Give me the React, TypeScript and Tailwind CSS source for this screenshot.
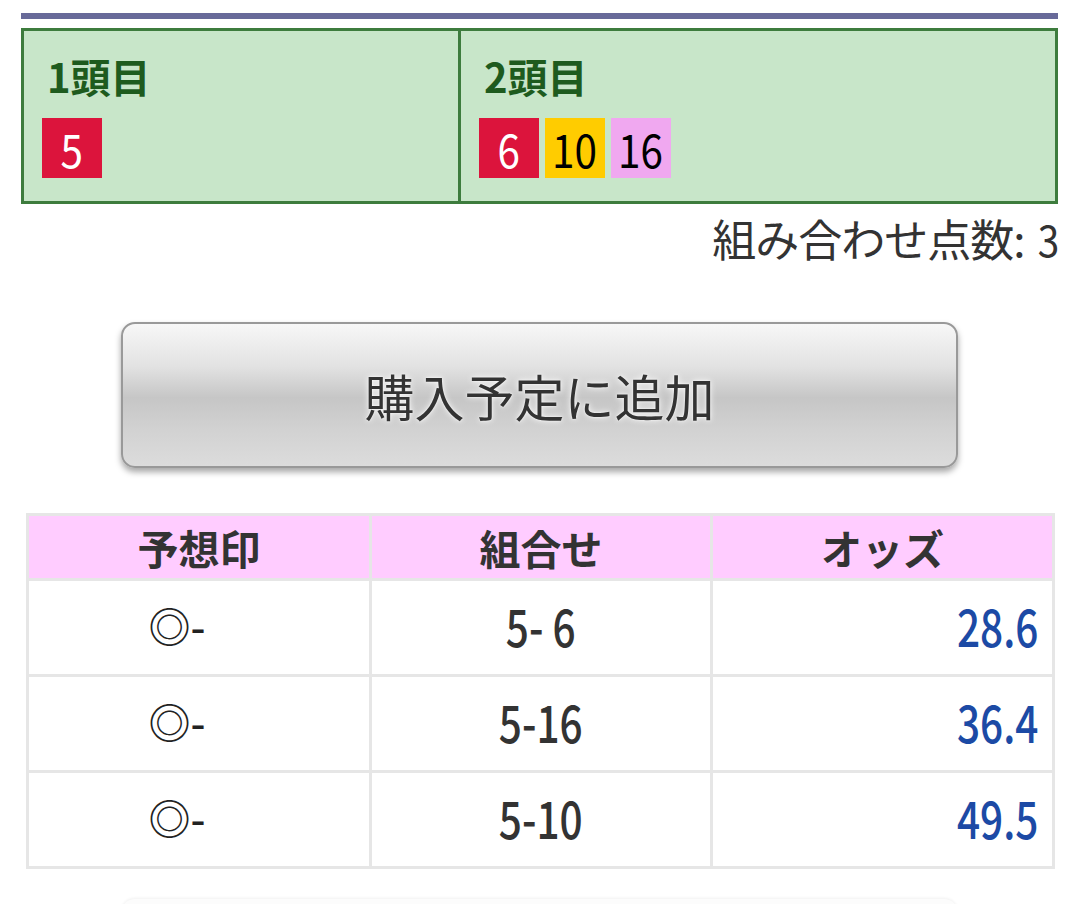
import React from "react";

const cjk = { fontFamily: '"Noto Sans CJK JP", "Noto Sans", sans-serif' };

function Badge({ n, cls }: { n: string; cls: string }) {
  return (
    <div className={`w-[60px] h-[60px] flex items-center justify-center text-[46px] leading-none ${cls}`}>
      <span className="inline-block scale-x-[0.88]">{n}</span>
    </div>
  );
}

const rows = [
  { mark: "◎-", combo: "5- 6", odds: "28.6" },
  { mark: "◎-", combo: "5-16", odds: "36.4" },
  { mark: "◎-", combo: "5-10", odds: "49.5" },
];

export default function App() {
  return (
    <div className="w-[1080px] h-[904px] bg-white overflow-hidden" style={cjk}>
      <div className="pl-[21px] w-[1058px]">
        <div className="mt-[13px] h-[6px] bg-[#686a99]" />
        <div className="mt-[9px] h-[176px] border-[3px] border-[#3d7c3d] bg-[#c8e6c9] flex">
          <div className="w-[434px] pl-[18px] pt-[21px]">
            <div className="pl-[5px] text-[40px] leading-[48px] font-bold text-[#1e5b1e]">1頭目</div>
            <div className="mt-[18px] flex gap-[6px]">
              <Badge n="5" cls="bg-[#dc143c] text-white" />
            </div>
          </div>
          <div className="flex-1 border-l-[3px] border-[#3d7c3d] pl-[18px] pt-[21px]">
            <div className="pl-[5px] text-[40px] leading-[48px] font-bold text-[#1e5b1e]">2頭目</div>
            <div className="mt-[18px] flex gap-[6px]">
              <Badge n="6" cls="bg-[#dc143c] text-white" />
              <Badge n="10" cls="bg-[#ffcc00] text-black" />
              <Badge n="16" cls="bg-[#f0a8f0] text-black" />
            </div>
          </div>
        </div>
        <div className="mt-[8px] flex justify-end items-baseline text-[44px] leading-[52px] text-[#333] tracking-[-1px]">
          <span>組み合わせ点数:</span>
          <span className="ml-[10px] inline-block scale-x-[0.88] origin-right">3</span>
        </div>
      </div>

      <div className="mt-[58px] ml-[121px] w-[837px] h-[146px] rounded-[14px] border-2 border-[#999] bg-[linear-gradient(to_bottom,#f7f7f7_0%,#e2e2e2_30%,#c6c6c6_52%,#d2d2d2_75%,#dcdcdc_100%)] shadow-[0_4px_6px_rgba(0,0,0,0.35)] flex items-center justify-center">
        <span className="text-[50px] leading-none text-[#333] [text-shadow:0_0_6px_#ffffff,0_0_2px_#ffffff]">購入予定に追加</span>
      </div>

      <table className="mt-[45px] ml-[26px] w-[1026px] table-fixed border-collapse">
        <colgroup>
          <col className="w-[343px]" />
          <col className="w-[341px]" />
          <col className="w-[342px]" />
        </colgroup>
        <thead>
          <tr>
            {["予想印", "組合せ", "オッズ"].map((h) => (
              <th
                key={h}
                className="h-[65px] p-0 border-[3px] border-[#e6e6e6] bg-[#ffccff] text-[41px] leading-none font-semibold text-[#333] text-center"
              >
                {h}
              </th>
            ))}
          </tr>
        </thead>
        <tbody>
          {rows.map((r, i) => (
            <tr key={i}>
              <td className="h-[96px] p-0 pr-[44px] pb-[6px] border-[3px] border-[#e6e6e6] text-center text-[42px] leading-none font-medium text-[#222]">
                {r.mark}
              </td>
              <td className="h-[96px] p-0 pb-[6px] border-[3px] border-[#e6e6e6] text-center text-[52px] leading-none font-medium text-[#333]">
                <span className="inline-block scale-x-[0.78]">{r.combo}</span>
              </td>
              <td className="h-[96px] p-0 pr-[14px] pb-[6px] border-[3px] border-[#e6e6e6] text-right text-[52px] leading-none font-medium text-[#1c4aa5]">
                <span className="inline-block scale-x-[0.78] origin-right">{r.odds}</span>
              </td>
            </tr>
          ))}
        </tbody>
      </table>

      <div className="mt-[30px] ml-[121px] w-[837px] h-[20px] rounded-t-[14px] bg-[#fcfcfc] shadow-[0_-1px_3px_rgba(0,0,0,0.06)]" />
    </div>
  );
}
